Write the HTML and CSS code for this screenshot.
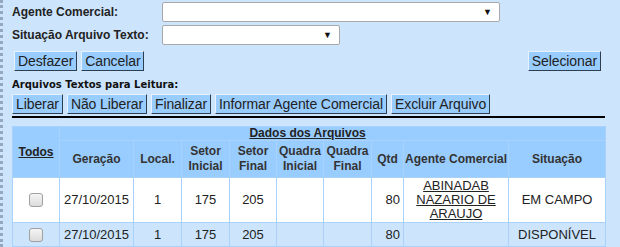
FILE: index.html
```html
<!DOCTYPE html>
<html lang="pt-BR">
<head>
    <meta charset="UTF-8">
    <title>Arquivos Textos para Leitura</title>
    <link rel="stylesheet" href="styles.css">
</head>
<body>
    <div class="page">
        <div class="filtros">
            <label>Agente Comercial:</label>
            <div class="combo combo-largo"><span class="seta">&#9660;</span></div>
            <label>Situação Arquivo Texto:</label>
            <div class="combo combo-curto"><span class="seta">&#9660;</span></div>
        </div>

        <div class="acoes">
            <div class="grupo">
                <button class="btn">Desfazer</button>
                <button class="btn">Cancelar</button>
            </div>
            <button class="btn">Selecionar</button>
        </div>

        <div class="titulo">Arquivos Textos para Leitura:</div>
        <div class="grupo grupo-leitura">
            <button class="btn">Liberar</button>
            <button class="btn">Não Liberar</button>
            <button class="btn">Finalizar</button>
            <button class="btn">Informar Agente Comercial</button>
            <button class="btn">Excluir Arquivo</button>
        </div>
        <div class="linha"></div>

        <table class="tabela">
            <colgroup>
                <col style="width: 46px">
                <col style="width: 73px">
                <col style="width: 47px">
                <col style="width: 47px">
                <col style="width: 46px">
                <col style="width: 46px">
                <col style="width: 47px">
                <col style="width: 31px">
                <col style="width: 104px">
                <col style="width: 96px">
            </colgroup>
            <tr class="cab">
                <th rowspan="2"><a href="#">Todos</a></th>
                <th colspan="9" class="dados"><a href="#">Dados dos Arquivos</a></th>
            </tr>
            <tr class="cab">
                <th>Geração</th>
                <th>Local.</th>
                <th>Setor<br>Inicial</th>
                <th>Setor<br>Final</th>
                <th>Quadra<br>Inicial</th>
                <th>Quadra<br>Final</th>
                <th>Qtd</th>
                <th>Agente Comercial</th>
                <th>Situação</th>
            </tr>
            <tr class="linha-par">
                <td><span class="check"></span></td>
                <td>27/10/2015</td>
                <td>1</td>
                <td>175</td>
                <td>205</td>
                <td></td>
                <td></td>
                <td class="num">80</td>
                <td><a href="#">ABINADAB NAZARIO DE ARAUJO</a></td>
                <td>EM CAMPO</td>
            </tr>
            <tr class="linha-impar">
                <td><span class="check"></span></td>
                <td>27/10/2015</td>
                <td>1</td>
                <td>175</td>
                <td>205</td>
                <td></td>
                <td></td>
                <td class="num">80</td>
                <td></td>
                <td>DISPONÍVEL</td>
            </tr>
        </table>
    </div>
</body>
</html>
```

FILE: styles.css
```css
body { margin: 0; background-color: #cce4fc; font-family: "Liberation Sans", Arial, sans-serif; color: #222; overflow: hidden; }
.page { border-left: 3px dotted #93a7bd; padding: 2px 14px 0 9px; height: 247px; box-sizing: border-box; }
.filtros { display: grid; grid-template-columns: 150px auto; row-gap: 3px; align-items: center; }
.filtros label { font-weight: bold; font-size: 12px; color: #222; }
.combo { height: 20px; box-sizing: border-box; background: #fff; border: 1px solid #a9a9a9; border-radius: 2px; display: flex; align-items: center; justify-content: flex-end; padding-right: 7px; }
.combo-largo { width: 338px; }
.combo-curto { width: 178px; }
.seta { font-size: 9px; color: #111; }
.acoes { display: flex; justify-content: space-between; align-items: center; margin-top: 6px; padding-left: 2px; width: 587px; }
.grupo { display: flex; gap: 4px; }
.btn { font-family: "Liberation Sans", Arial, sans-serif; font-size: 14px; letter-spacing: -0.1px; color: #222; background-color: #99ccff; height: 20px; padding: 0 3px; border: 1px solid; border-color: #e8f2ff #2c3e50 #2c3e50 #e8f2ff; line-height: 17px; cursor: pointer; }
.titulo { font-family: "DejaVu Sans", Verdana, sans-serif; font-weight: bold; font-size: 10px; line-height: 13px; color: #111; margin-top: 7px; }
.grupo-leitura { margin-top: 3px; }
.linha { width: 593px; height: 2px; background: #000; margin-top: 2px; }
.tabela { margin-top: 8px; width: 594px; table-layout: fixed; border-spacing: 1px; background-color: #a8d2fc; font-size: 13px; }
.tabela th { background-color: #99ccff; font-weight: bold; font-size: 12px; color: #333; padding: 3px 0; line-height: 15px; }
.tabela th a { color: #222; }
.cab th.dados { padding: 0 50px 0 0; line-height: 13px; }
.tabela td { text-align: center; padding: 0; line-height: 14px; }
.tabela td a { color: #222; }
.linha-par td { background-color: #fff; height: 44px; }
.linha-impar td { background-color: #cce4fc; height: 23px; }
.tabela td.num { text-align: right; padding-right: 3px; }
.check { display: inline-block; width: 12px; height: 12px; border: 1px solid #a0a0a0; border-radius: 3px; background: linear-gradient(#f4f4f4, #dcdcdc); vertical-align: middle; }
```
